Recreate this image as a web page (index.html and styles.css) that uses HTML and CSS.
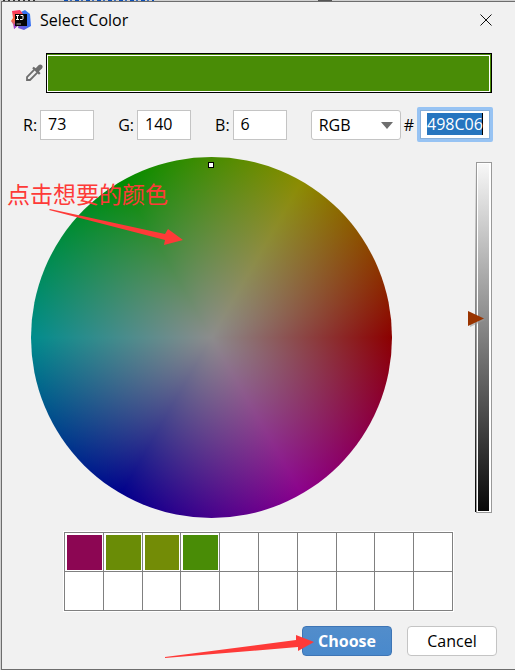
FILE: index.html
```html
<!DOCTYPE html>
<html lang="en">
<head>
<meta charset="utf-8">
<meta name="viewport" content="width=device-width, initial-scale=1">
<title>Select Color</title>
<link rel="stylesheet" href="styles.css">
</head>
<body>
<main class="dialog">
  <header class="titlebar">
    <svg class="logo" viewBox="0 0 20 20" aria-hidden="true">
      <defs>
        <linearGradient id="blue" x1="0" y1="1" x2="1" y2="0"><stop offset="0" stop-color="#8a4fd0"/><stop offset=".5" stop-color="#3b6cf0"/><stop offset="1" stop-color="#2f7df5"/></linearGradient>
        <linearGradient id="pink" x1="0" y1="0" x2="0" y2="1"><stop offset="0" stop-color="#fb2d62"/><stop offset=".5" stop-color="#fb6a3c"/><stop offset="1" stop-color="#a04ad0"/></linearGradient>
      </defs>
      <path d="M10 2 14 0l5 4 1 12-7 4-6-2z" fill="url(#blue)"/>
      <path d="M1 1 9 0l3 4-6 12-3 3-1-5-2-3 2-3z" fill="url(#pink)"/>
      <path d="M3 14h6l-6 5z" fill="#9a45c8"/>
      <path d="M4 4h12v12H4z" fill="#050505"/>
      <path d="M5 5.500h3M6.500 5.500v4M5 9.500h3M9.500 5.500H12v3q0 1-1 1H9" fill="none" stroke="#fff" stroke-width="1"/>
      <path d="M5.500 14h4.500" stroke="#aaa"/>
    </svg>
    <h1 class="title">Select Color</h1>
    <button class="close" type="button" aria-label="Close">
      <svg viewBox="0 0 12 12" aria-hidden="true"><path d="m.5.5 11 11M11.500.5l-11 11"/></svg>
    </button>
  </header>

  <section class="preview-row">
    <button class="picker" type="button" aria-label="Pick color">
      <svg viewBox="0 0 18 18" aria-hidden="true">
        <path d="M9.300 5.700 2 13v3h3l7.300-7.300" fill="none" stroke="#6e6e6e" stroke-width="1.800"/>
        <path d="m7.200 4.200 1.500-1.500 2 1.500L13.500 1.200Q15.500-.2 17 1.300q1.300 1.500 0 3.200L14 7.300l1.500 2-1.500 1.500z" fill="#6e6e6e"/>
      </svg>
    </button>
    <div class="preview"><div class="preview-fill"></div></div>
  </section>

  <form class="values">
    <div class="field"><label for="red">R:</label><input id="red" class="number" type="text" value="73"></div>
    <div class="field"><label for="green">G:</label><input id="green" class="number" type="text" value="140"></div>
    <div class="field"><label for="blue-value">B:</label><input id="blue-value" class="number" type="text" value="6"></div>
    <div class="field">
      <div class="mode">
        <select aria-label="Color model"><option>RGB</option><option>HSB</option></select>
        <svg class="mode-arrow" viewBox="0 0 12 7" aria-hidden="true"><path d="M0 0h12L6 7z"/></svg>
      </div>
      <label for="hex">#</label><input id="hex" class="hex" type="text" value="498C06">
    </div>
  </form>

  <section class="chooser">
    <div class="wheel"><span class="wheel-mark"></span></div>
    <div class="brightness">
      <div class="brightness-fill"></div>
      <svg class="brightness-mark" viewBox="0 0 18 18" aria-hidden="true"><path d="m2 3 15 7-15 7z" fill="#999" opacity=".6"/><path d="m0 1 16 7.500L0 16z" fill="#993400"/></svg>
      <input class="brightness-input" type="range" min="0" max="100" value="55" aria-label="Brightness">
    </div>
    <div class="note">
      <p class="note-text">点击想要的颜色</p>
      <svg class="note-arrow" viewBox="0 0 136 38" aria-hidden="true"><path d="m0 1 1-1 115 25 3-5 15 11-19 5 1-5z"/></svg>
    </div>
  </section>

  <section class="recent" aria-label="Recent colors">
    <button class="cell plum" type="button" aria-label="Plum"></button>
    <button class="cell olive" type="button" aria-label="Olive"></button>
    <button class="cell mustard" type="button" aria-label="Mustard"></button>
    <button class="cell leaf" type="button" aria-label="Green"></button>
    <span class="cell"></span><span class="cell"></span><span class="cell"></span><span class="cell"></span><span class="cell"></span><span class="cell"></span>
    <span class="cell"></span><span class="cell"></span><span class="cell"></span><span class="cell"></span><span class="cell"></span><span class="cell"></span><span class="cell"></span><span class="cell"></span><span class="cell"></span><span class="cell"></span>
  </section>

  <footer class="actions">
    <div class="choose-wrap">
      <button class="btn primary" type="button">Choose</button>
      <svg class="choose-arrow" viewBox="0 0 150 24" aria-hidden="true"><path d="M0 23v-1L131 5V0l18 7-16 9v-4z"/></svg>
    </div>
    <button class="btn" type="button">Cancel</button>
  </footer>
</main>
</body>
</html>
```
FILE: styles.css
```css
* {
  box-sizing: border-box;
}

body {
  margin: 0;
  padding: 1px 0 0 1px;
  min-height: 100vh;
  display: flex;
  background:
    repeating-linear-gradient(90deg, #0b4fb8 0 4px, #d0d0d0 4px 6px, #3a6fc0 6px 8px, #d0d0d0 8px 11px) 64px 0 / 90px 1px no-repeat,
    repeating-linear-gradient(90deg, #333 0 2px, #d0d0d0 2px 5px) 3px 0 / 33px 1px no-repeat,
    linear-gradient(#555, #555) 318px 0 / 14px 1px no-repeat,
    #d0d0d0;
  color: #000;
  font: 16px/20px "Open Sans", "Noto Sans CJK SC", sans-serif;
}

button,
input,
select {
  margin: 0;
  font: inherit;
  color: inherit;
}

.dialog {
  flex: 1;
  min-width: 0;
  padding-bottom: 12px;
  border: 1px solid #6d6d6d;
  border-right: 0;
  background: #f1f1f1;
}

.titlebar {
  display: flex;
  align-items: center;
  height: 36px;
  padding: 0 23px 0 9px;
}

.logo {
  width: 20px;
  height: 20px;
}

.title {
  flex: 1;
  margin: 0 0 0 9px;
  font-size: 16px;
  font-weight: 400;
}

.close,
.picker {
  display: flex;
  padding: 0;
  border: 0;
  background: none;
}

.close svg {
  width: 12px;
  height: 12px;
  fill: none;
  stroke: #111;
}

.preview-row {
  display: flex;
  align-items: center;
  gap: 3px;
  margin: 15px 23px 0 23px;
}

.picker svg {
  width: 18px;
  height: 18px;
}

.preview {
  flex: 1;
  height: 40px;
  padding: 1px 1px 0 0;
  border: 1px solid #000;
  background: #498c06;
}

.preview-fill {
  height: 100%;
  border: 1px solid #fff;
}

.values {
  display: flex;
  justify-content: space-between;
  align-items: center;
  margin: 14px 22px 0 21px;
}

.field {
  display: flex;
  align-items: center;
  gap: 3px;
}

.number {
  width: 54px;
  height: 30px;
  padding: 0 7px 1px;
  border: 1px solid #c4c4c4;
  background: #fff;
}

.mode {
  position: relative;
}

.mode select {
  appearance: none;
  width: 90px;
  height: 30px;
  padding: 0 7px;
  border: 1px solid #c4c4c4;
  border-radius: 3px;
  background: #fff;
}

.mode-arrow {
  position: absolute;
  top: 12px;
  right: 8px;
  width: 12px;
  height: 7px;
  fill: #6e6e6e;
  pointer-events: none;
}

.hex {
  width: 76px;
  height: 35px;
  padding: 3px 7px 4px;
  border: 3px solid #97c3f3;
  border-radius: 2px;
  outline: 1px solid #87afda;
  outline-offset: -4px;
  background: linear-gradient(to left, #000 1px, #2675bf 1px) content-box, #fff;
  color: #fff;
}

.chooser {
  position: relative;
  display: flex;
  justify-content: space-between;
  margin: 15px 23px 0 29px;
}

.wheel {
  position: relative;
  flex: 0 1 361px;
  aspect-ratio: 1;
  border-radius: 50%;
  background:
    radial-gradient(closest-side, #8c8c8c, rgb(140 140 140 / 0)),
    conic-gradient(from 90deg, #8c0000, #8c008c, #00008c, #008c8c, #008c00, #8c8c00, #8c0000);
}

.wheel-mark {
  position: absolute;
  top: 5px;
  left: calc(50% - 4px);
  width: 6px;
  height: 6px;
  border: 1px solid #000;
  background: #fff;
}

.brightness {
  position: relative;
  width: 16px;
  margin: 5px 0;
  padding: 1px 2px 1px 1px;
  border: 1px solid #999;
  background: #fff;
}

.brightness::before {
  content: "";
  position: absolute;
  inset: 0 auto 0 -2px;
  width: 1px;
  background: linear-gradient(#f1f1f1, #888 40%, #000);
}

.brightness-fill {
  height: 100%;
  background: linear-gradient(#f7f7f7, #080808);
}

.brightness-mark {
  position: absolute;
  top: 42%;
  left: -9px;
  width: 18px;
  height: 18px;
}

.brightness-input {
  position: absolute;
  inset: 0;
  width: 100%;
  height: 100%;
  margin: 0;
  writing-mode: vertical-lr;
  direction: rtl;
  opacity: 0;
}

.note {
  position: absolute;
  top: 20px;
  left: -24px;
  color: #fe3a38;
  pointer-events: none;
}

.note-text {
  margin: 0;
  font: 23px/32px "Noto Sans CJK SC", sans-serif;
}

.note-arrow {
  display: block;
  width: 136px;
  height: 38px;
  margin-left: 42px;
  fill: #fe3a38;
}

.recent {
  display: grid;
  grid-template-columns: repeat(10, 1fr);
  gap: 1px;
  margin: 14px 62px 0;
  border: 1px solid #808080;
  outline: 1px solid #fff;
  background: #808080;
}

.cell {
  height: 38px;
  padding: 2px 1px 1px 2px;
  border: 0;
  background-color: #fff;
}

.cell::before {
  content: "";
  display: block;
  height: 100%;
}

.plum::before {
  background: #8c0653;
}

.olive::before {
  background: #6a8c06;
}

.mustard::before {
  background: #738c06;
}

.leaf::before {
  background: #498c06;
}

.actions {
  display: flex;
  justify-content: flex-end;
  gap: 15px;
  margin: 15px 18px 0 0;
}

.choose-wrap {
  position: relative;
}

.btn {
  display: block;
  width: 90px;
  height: 30px;
  padding: 0;
  border: 1px solid #c4c4c4;
  border-radius: 4px;
  background: #fff;
}

.primary {
  border-color: #3e75b5;
  background: linear-gradient(#528dcb, #4989cc);
  color: #fff;
  font-weight: 700;
}

.choose-arrow {
  position: absolute;
  top: 9px;
  right: 77px;
  width: 150px;
  height: 24px;
  fill: #fe3a38;
  pointer-events: none;
}
```
